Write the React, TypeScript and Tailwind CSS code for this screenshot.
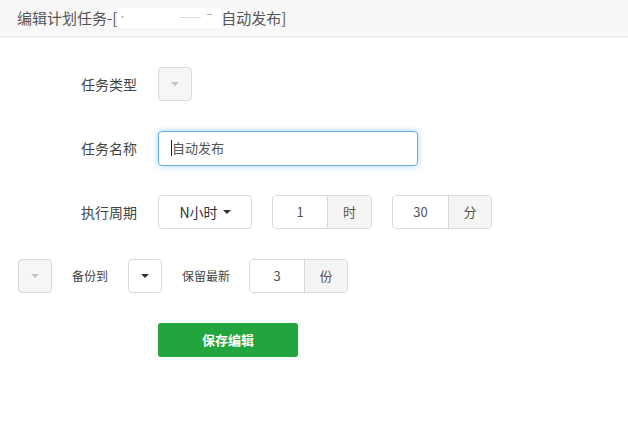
const font = { fontFamily: '"Noto Sans CJK SC", "Microsoft YaHei", sans-serif' };

function Caret({ dim }: { dim?: boolean }) {
  return (
    <span
      className={`inline-block w-0 h-0 border-l-[4px] border-r-[4px] border-t-[4px] border-l-transparent border-r-transparent ${
        dim ? "border-t-[#c4c4c4]" : "border-t-[#333]"
      }`}
    />
  );
}

function SelectBox({ disabled }: { disabled?: boolean }) {
  return (
    <div
      className={`w-[34px] h-[34px] rounded-[4px] border border-[#d9d9d9] flex items-center justify-center ${
        disabled ? "bg-[#f6f6f6]" : "bg-white"
      }`}
    >
      <Caret dim={disabled} />
    </div>
  );
}

function InputGroup({ value, unit, inputW, addonW }: { value: string; unit: string; inputW: string; addonW: string }) {
  return (
    <div className="flex h-[34px] rounded-[4px] border border-[#d9d9d9] overflow-hidden text-[13px] text-[#555]">
      <div className={`${inputW} bg-white flex items-center justify-center`}>{value}</div>
      <div className={`${addonW} bg-[#f5f5f5] border-l border-[#d9d9d9] flex items-center justify-center`}>{unit}</div>
    </div>
  );
}

function Row({ label, children }: { label: string; children: React.ReactNode }) {
  return (
    <div className="flex items-center h-[34px]">
      <div className="w-[158px] pr-[21px] text-right text-[14px] text-[#444]">{label}</div>
      {children}
    </div>
  );
}

export default function App() {
  return (
    <div className="w-[628px] h-[437px] bg-white overflow-hidden" style={font}>
      <div className="h-[37px] bg-[#f8f8f8] border-b border-[#e5e5e5] flex items-center pl-[17px] text-[15px] text-[#555]">
        <span>编辑计划任务-[</span>
        <span className="w-[104px] h-[20px] bg-white relative">
          <span className="absolute left-[4px] top-[8px] w-[3px] h-[2px] bg-[#ccc]" />
          <span className="absolute left-[62px] top-[9px] w-[22px] h-[1px] bg-[#ddd]" />
          <span className="absolute left-[90px] top-[6px] w-[5px] h-[6px] border-t border-[#aaa]" />
        </span>
        <span>自动发布]</span>
      </div>

      <div className="pt-[30px] flex flex-col gap-[30px]">
        <Row label="任务类型">
          <SelectBox disabled />
        </Row>
        <Row label="任务名称">
          <div className="w-[260px] h-[35px] rounded-[4px] border border-[#66afe9] shadow-[0_0_6px_rgba(102,175,233,0.6)] bg-white flex items-center pl-[12px] text-[13px] text-[#555]">
            <span className="w-px h-[16px] bg-[#222]" />
            <span>自动发布</span>
          </div>
        </Row>
        <Row label="执行周期">
          <div className="flex items-center gap-[20px]">
            <div className="w-[94px] h-[34px] rounded-[4px] border border-[#d9d9d9] bg-white flex items-center justify-center gap-[5px] text-[14px] text-[#333]">
              <span>N小时</span>
              <Caret />
            </div>
            <InputGroup value="1" unit="时" inputW="w-[54px]" addonW="w-[44px]" />
            <InputGroup value="30" unit="分" inputW="w-[55px]" addonW="w-[43px]" />
          </div>
        </Row>

        <div className="flex items-center h-[34px] pl-[18px] text-[12px] text-[#444]">
          <SelectBox disabled />
          <span className="ml-[20px]">备份到</span>
          <div className="ml-[20px]">
            <SelectBox />
          </div>
          <span className="ml-[20px]">保留最新</span>
          <div className="ml-[19px]">
            <InputGroup value="3" unit="份" inputW="w-[54px]" addonW="w-[43px]" />
          </div>
        </div>

        <div className="pl-[158px]">
          <button className="w-[140px] h-[34px] rounded-[3px] bg-[#21a53c] text-white text-[13px] font-bold">
            保存编辑
          </button>
        </div>
      </div>
    </div>
  );
}
